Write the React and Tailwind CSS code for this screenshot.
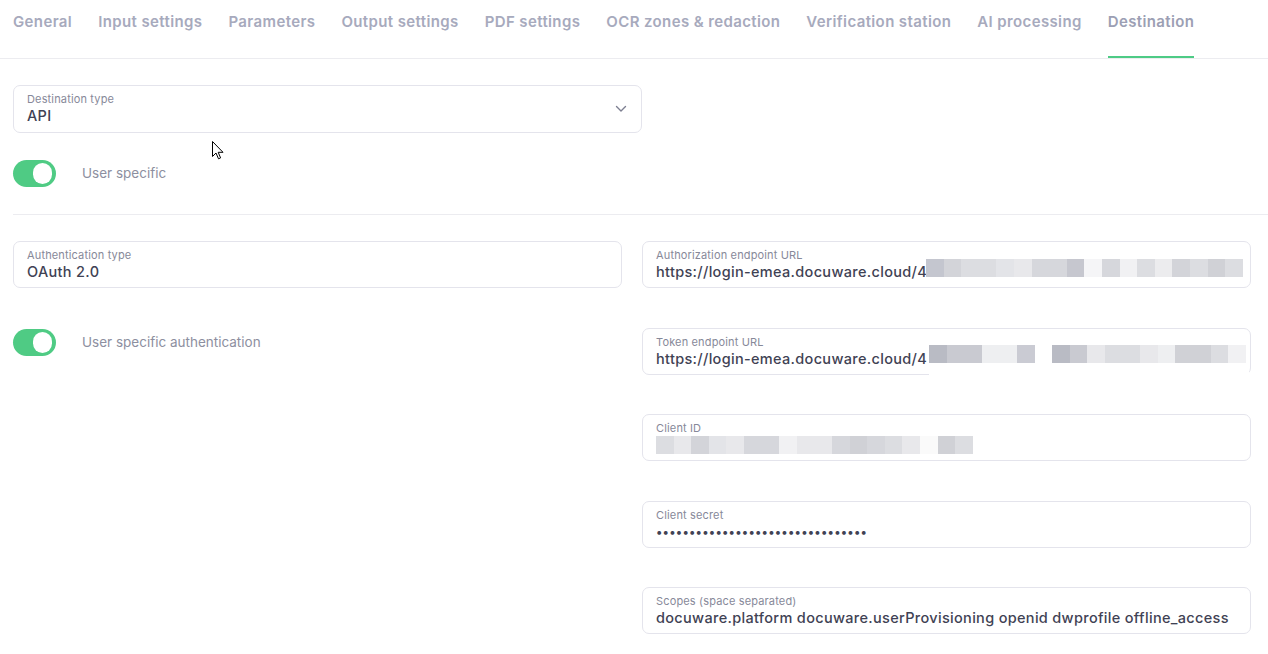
import React from "react";

const tabs = [
  "General",
  "Input settings",
  "Parameters",
  "Output settings",
  "PDF settings",
  "OCR zones & redaction",
  "Verification station",
  "AI processing",
  "Destination",
];

const authBlocks = ["#c4c6cf","#d3d4d9","#dcdde1","#dcdde1","#e3e4e8","#e8e8eb","#d6d7dc","#d6d7dc","#c6c7cf","#f5f5f7","#d6d7dc","#f1f1f3","#dcdde1","#ececee","#d3d4d9","#dcdde1","#d0d1d6","#dcdde1"];
const tokenBlocks = ["#b9bbc4","#c9cad1","#c9cad1","#eeeff1","#eeeff1","#cacbd3","#ffffff","#b9bbc4","#c9cad1","#e8e8eb","#dcdde1","#dcdde1","#e8e8eb","#eeeff1","#d0d1d6","#d0d1d6","#dcdde1","#f1f1f3"];
const clientBlocks = ["#dcdde1","#e8e8eb","#d3d4d9","#e3e4e8","#e8e8eb","#d6d7dc","#d6d7dc","#f1f1f3","#e8e8eb","#e8e8eb","#d6d7dc","#d0d1d6","#d6d7dc","#dcdde1","#e8e8eb","#fafafa","#d0d1d6","#dcdde1"];

function Blocks({ colors, className = "" }) {
  return (
    <div className={"flex h-[18px] " + className}>
      {colors.map((c, i) => (
        <div key={i} className="h-full w-[17.6px]" style={{ backgroundColor: c }} />
      ))}
    </div>
  );
}

function Toggle() {
  return (
    <div className="flex h-[27px] w-[43px] items-center justify-end rounded-full bg-[#4fcb84] pr-[4px]">
      <div className="h-[21px] w-[19px] rounded-full bg-white" />
    </div>
  );
}

function Field({ label, children, className = "" }) {
  return (
    <div className={"relative h-[47px] rounded-[7px] border border-[#e4e4ec] bg-white px-[13px] pt-[6px] " + className}>
      <div className="text-[11px] leading-[14px] tracking-[0.15px] text-[#878999]">{label}</div>
      <div className="flex items-center text-[14.5px] font-medium leading-[19px] tracking-[0.32px] text-[#3f4254]">{children}</div>
    </div>
  );
}

export default function App() {
  return (
    <div className="relative min-h-[654px] w-full bg-white font-['Inter',sans-serif]">
      <nav className="flex h-[59px] gap-[26px] border-b border-[#ececf0] pl-[13px]">
        {tabs.map((t) => (
          <div
            key={t}
            className={
              "flex h-[58px] items-start border-b-2 pt-[11px] text-[15px] font-semibold leading-[22px] tracking-[0.38px] " +
              (t === "Destination" ? "border-[#4ecb85] text-[#9c9fb4]" : "border-transparent text-[#a7aabd]")
            }
          >
            {t}
          </div>
        ))}
      </nav>

      <div className="pl-[13px]">
        <div className="mt-[26px] flex h-[48px] w-[629px] items-center justify-between rounded-[7px] border border-[#e4e4ec] px-[13px]">
          <div className="-mt-[2px]">
            <div className="text-[11px] leading-[14px] tracking-[0.15px] text-[#878999]">Destination type</div>
            <div className="text-[14.5px] font-medium leading-[19px] tracking-[0.32px] text-[#3f4254]">API</div>
          </div>
          <svg width="12" height="8" viewBox="0 0 12 8" className="mr-[1px]">
            <path d="M1.5 1.5 L6 6 L10.5 1.5" fill="none" stroke="#7d7f91" strokeWidth="1.4" strokeLinecap="round" strokeLinejoin="round" />
          </svg>
        </div>

        <div className="mt-[27px] flex items-center gap-[26px]">
          <Toggle />
          <span className="text-[13.5px] text-[#8d8fa0]">User specific</span>
        </div>

        <div className="mt-[27px] h-px bg-[#ececf0]" />

        <div className="mt-[26px] flex gap-[20px]">
          <div className="w-[609px]">
            <Field label="Authentication type">OAuth 2.0</Field>
            <div className="mt-[41px] flex items-center gap-[26px]">
              <Toggle />
              <span className="text-[13.5px] text-[#8d8fa0]">User specific authentication</span>
            </div>
          </div>

          <div className="flex w-[609px] flex-col gap-[39.5px]">
            <Field label="Authorization endpoint URL">
              <span className="whitespace-nowrap">https://login-emea.docuware.cloud/4</span>
              <Blocks colors={authBlocks} className="absolute left-[283px] top-[17px]" />
            </Field>
            <Field label="Token endpoint URL">
              <span className="whitespace-nowrap">https://login-emea.docuware.cloud/4</span>
              <Blocks colors={tokenBlocks} className="absolute left-[286px] top-[16px]" />
              <div className="absolute left-[286px] top-[34px] h-[14px] w-[320px] bg-white" />
            </Field>
            <Field label="Client ID">
              <Blocks colors={clientBlocks} className="mt-[1px]" />
            </Field>
            <Field label="Client secret">
              <span className="text-[12px] leading-[19px] tracking-[0.2px]">••••••••••••••••••••••••••••••••</span>
            </Field>
            <Field label="Scopes (space separated)">
              <span className="whitespace-nowrap">docuware.platform docuware.userProvisioning openid dwprofile offline_access</span>
            </Field>
          </div>
        </div>
      </div>

      <svg className="absolute left-[212px] top-[141px]" width="12" height="19" viewBox="0 0 12 19">
        <path d="M0.5 0.5 L0.5 15.5 L4 12 L6.5 17.8 L8.6 16.9 L6.2 11.3 L11 11.3 Z" fill="#fff" stroke="#000" strokeWidth="1" strokeLinejoin="round" />
      </svg>
    </div>
  );
}
